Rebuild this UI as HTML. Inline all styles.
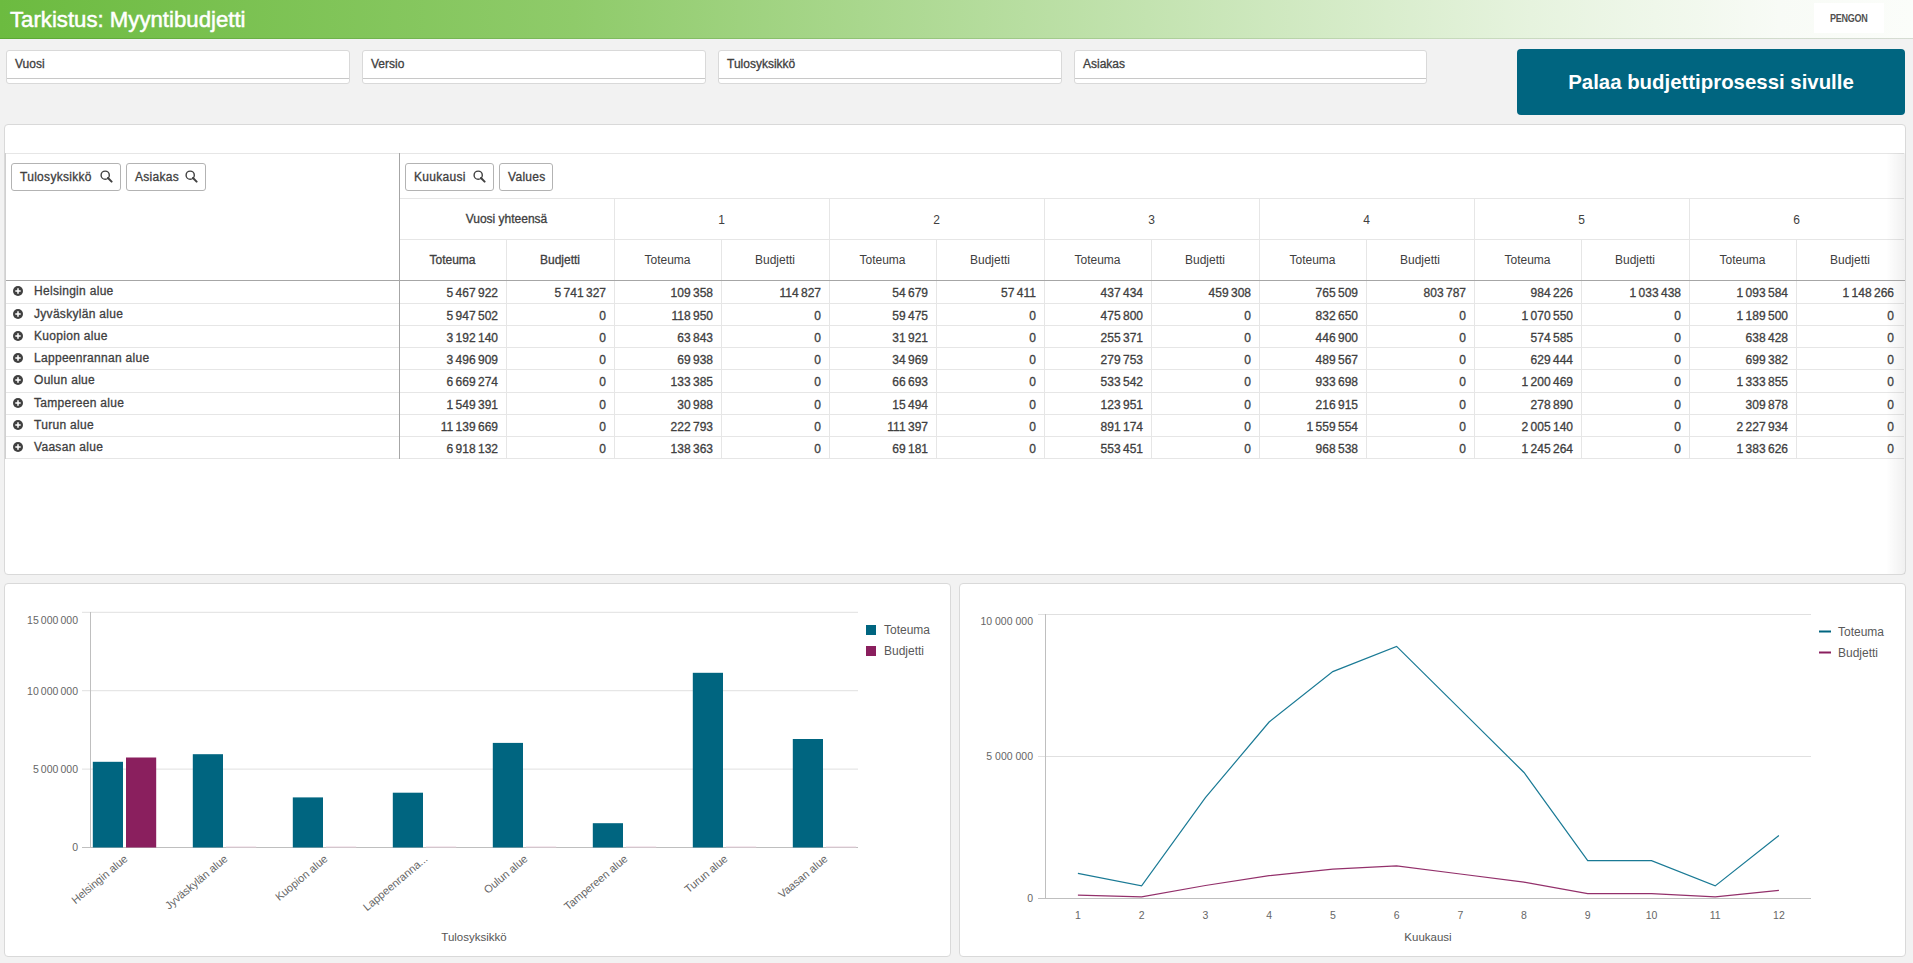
<!DOCTYPE html><html><head><meta charset="utf-8"><title>Tarkistus</title><style>
*{margin:0;padding:0;box-sizing:border-box}
html,body{width:1913px;height:963px;overflow:hidden;background:#f2f2f2;font-family:"Liberation Sans",sans-serif;color:#404040;position:relative}
#hdr{position:absolute;left:0;top:0;width:1913px;height:39px;background:linear-gradient(90deg,#6cbb40 0%,#8fcb6a 30%,#c3e3b0 60%,#e6f3de 80%,#f8fbf6 93%,#fbfdfa 100%)}#hdr:after{content:"";position:absolute;left:0;top:38px;width:1913px;height:1px;background:linear-gradient(90deg,#5aa833 0%,#88bf6a 40%,#c6d9bb 75%,#d6dcd3 100%)}
#hdr .title{position:absolute;left:10px;top:7px;font-size:22.2px;line-height:26px;color:#fff;white-space:nowrap;-webkit-text-stroke:0.5px #fff}
#hdr .logo{position:absolute;left:1814px;top:3px;width:70px;height:30px;background:#fff;color:#333}#hdr .logo span{position:absolute;left:16px;top:10px;font-size:11px;line-height:11px;font-weight:bold;letter-spacing:-0.3px;transform:scaleX(0.82);transform-origin:0 0;color:#505050}
.fbox{position:absolute;top:50px;height:34px;background:#fff;border:1px solid #d9d9d9;border-radius:3px}
.fbox span{position:absolute;left:8px;top:6px;font-size:12px;color:#404040;-webkit-text-stroke:0.3px #404040}
.fline{position:absolute;left:0;right:0;top:27px;height:1px;background:#c8c8c8}
#btn{position:absolute;left:1517px;top:49px;width:388px;height:66px;background:#006580;border-radius:4px;color:#fff;font-size:20.4px;font-weight:bold;text-align:center;line-height:66px;white-space:nowrap}
.panel{position:absolute;background:#fff;border:1px solid #d9d9d9;border-radius:4px}
#tbl{position:absolute;left:0;top:0}
.ln{position:absolute}
.tx{position:absolute;font-size:12px;white-space:nowrap;color:#404040;line-height:14px}
.tx.b{-webkit-text-stroke:0.3px #404040}
.tx.rl{letter-spacing:0.3px}
.pill{position:absolute;top:163px;height:28px;border:1px solid #b3b3b3;border-radius:3px;background:#fff}
.pill span{position:absolute;left:8px;top:6px;font-size:12px;letter-spacing:0.3px;color:#404040;-webkit-text-stroke:0.3px #404040}
.pill .srch{position:absolute;right:7px;top:6px}
.plus{position:absolute}
.chart{position:absolute}
.ax{font-size:10.5px;fill:#666;font-family:"Liberation Sans",sans-serif}
.axl{font-size:11px;fill:#666;font-family:"Liberation Sans",sans-serif}
.axt{font-size:11.5px;fill:#555;font-family:"Liberation Sans",sans-serif}
.lg{font-size:12px;fill:#595959;font-family:"Liberation Sans",sans-serif}
</style></head><body><div id="hdr"><div class="title">Tarkistus: Myyntibudjetti</div><div class="logo"><span>PENGON</span></div></div><div class="fbox" style="left:6px;width:344px"><span>Vuosi</span><div class="fline"></div></div><div class="fbox" style="left:362px;width:344px"><span>Versio</span><div class="fline"></div></div><div class="fbox" style="left:718px;width:344px"><span>Tulosyksikkö</span><div class="fline"></div></div><div class="fbox" style="left:1074px;width:353px"><span>Asiakas</span><div class="fline"></div></div><div id="btn">Palaa budjettiprosessi sivulle</div><div class="panel" id="tpanel" style="left:4px;top:124px;width:1902px;height:451px"></div><div id="tbl"><div class="ln" style="left:6px;top:153px;width:1898px;height:1px;background:#e6e6e6"></div><div class="ln" style="left:400px;top:198px;width:1504px;height:1px;background:#e6e6e6"></div><div class="ln" style="left:400px;top:239px;width:1504px;height:1px;background:#e6e6e6"></div><div class="ln" style="left:6px;top:303px;width:1898px;height:1px;background:#e6e6e6"></div><div class="ln" style="left:6px;top:325px;width:1898px;height:1px;background:#e6e6e6"></div><div class="ln" style="left:6px;top:347px;width:1898px;height:1px;background:#e6e6e6"></div><div class="ln" style="left:6px;top:369px;width:1898px;height:1px;background:#e6e6e6"></div><div class="ln" style="left:6px;top:392px;width:1898px;height:1px;background:#e6e6e6"></div><div class="ln" style="left:6px;top:414px;width:1898px;height:1px;background:#e6e6e6"></div><div class="ln" style="left:6px;top:436px;width:1898px;height:1px;background:#e6e6e6"></div><div class="ln" style="left:6px;top:458px;width:1898px;height:1px;background:#e6e6e6"></div><div class="ln" style="left:399px;top:153px;width:1px;height:306px;background:#a6a6a6"></div><div class="ln" style="left:5px;top:153px;width:1px;height:306px;background:#d0d0d0"></div><div class="ln" style="left:1886px;top:153px;width:19px;height:421px;background:linear-gradient(90deg,rgba(0,0,0,0),rgba(0,0,0,0.06))"></div><div class="ln" style="left:614px;top:198px;width:1px;height:261px;background:#e6e6e6"></div><div class="ln" style="left:829px;top:198px;width:1px;height:261px;background:#e6e6e6"></div><div class="ln" style="left:1044px;top:198px;width:1px;height:261px;background:#e6e6e6"></div><div class="ln" style="left:1259px;top:198px;width:1px;height:261px;background:#e6e6e6"></div><div class="ln" style="left:1474px;top:198px;width:1px;height:261px;background:#e6e6e6"></div><div class="ln" style="left:1689px;top:198px;width:1px;height:261px;background:#e6e6e6"></div><div class="ln" style="left:506px;top:239px;width:1px;height:220px;background:#e6e6e6"></div><div class="ln" style="left:721px;top:239px;width:1px;height:220px;background:#e6e6e6"></div><div class="ln" style="left:936px;top:239px;width:1px;height:220px;background:#e6e6e6"></div><div class="ln" style="left:1151px;top:239px;width:1px;height:220px;background:#e6e6e6"></div><div class="ln" style="left:1366px;top:239px;width:1px;height:220px;background:#e6e6e6"></div><div class="ln" style="left:1581px;top:239px;width:1px;height:220px;background:#e6e6e6"></div><div class="ln" style="left:1796px;top:239px;width:1px;height:220px;background:#e6e6e6"></div><div class="ln" style="left:6px;top:280px;width:1899px;height:1px;background:#a6a6a6"></div><div class="pill" style="left:11px;width:110px"><span>Tulosyksikkö</span><svg class="srch" width="13" height="13" viewBox="0 0 13 13"><circle cx="5.2" cy="5.2" r="4.1" fill="none" stroke="#404040" stroke-width="1.4"/><line x1="8" y1="8" x2="11.6" y2="11.6" stroke="#404040" stroke-width="2" stroke-linecap="round"/></svg></div><div class="pill" style="left:126px;width:80px"><span>Asiakas</span><svg class="srch" width="13" height="13" viewBox="0 0 13 13"><circle cx="5.2" cy="5.2" r="4.1" fill="none" stroke="#404040" stroke-width="1.4"/><line x1="8" y1="8" x2="11.6" y2="11.6" stroke="#404040" stroke-width="2" stroke-linecap="round"/></svg></div><div class="pill" style="left:405px;width:89px"><span>Kuukausi</span><svg class="srch" width="13" height="13" viewBox="0 0 13 13"><circle cx="5.2" cy="5.2" r="4.1" fill="none" stroke="#404040" stroke-width="1.4"/><line x1="8" y1="8" x2="11.6" y2="11.6" stroke="#404040" stroke-width="2" stroke-linecap="round"/></svg></div><div class="pill" style="left:499px;width:54px"><span>Values</span></div><div class="tx b" style="left:399px;top:212px;width:215px;text-align:center">Vuosi yhteensä</div><div class="tx " style="left:614px;top:213px;width:215px;text-align:center">1</div><div class="tx " style="left:829px;top:213px;width:215px;text-align:center">2</div><div class="tx " style="left:1044px;top:213px;width:215px;text-align:center">3</div><div class="tx " style="left:1259px;top:213px;width:215px;text-align:center">4</div><div class="tx " style="left:1474px;top:213px;width:215px;text-align:center">5</div><div class="tx " style="left:1689px;top:213px;width:215px;text-align:center">6</div><div class="tx b" style="left:399px;top:253px;width:107px;text-align:center">Toteuma</div><div class="tx b" style="left:506px;top:253px;width:108px;text-align:center">Budjetti</div><div class="tx " style="left:614px;top:253px;width:107px;text-align:center">Toteuma</div><div class="tx " style="left:721px;top:253px;width:108px;text-align:center">Budjetti</div><div class="tx " style="left:829px;top:253px;width:107px;text-align:center">Toteuma</div><div class="tx " style="left:936px;top:253px;width:108px;text-align:center">Budjetti</div><div class="tx " style="left:1044px;top:253px;width:107px;text-align:center">Toteuma</div><div class="tx " style="left:1151px;top:253px;width:108px;text-align:center">Budjetti</div><div class="tx " style="left:1259px;top:253px;width:107px;text-align:center">Toteuma</div><div class="tx " style="left:1366px;top:253px;width:108px;text-align:center">Budjetti</div><div class="tx " style="left:1474px;top:253px;width:107px;text-align:center">Toteuma</div><div class="tx " style="left:1581px;top:253px;width:108px;text-align:center">Budjetti</div><div class="tx " style="left:1689px;top:253px;width:107px;text-align:center">Toteuma</div><div class="tx " style="left:1796px;top:253px;width:108px;text-align:center">Budjetti</div><svg class="plus" style="left:12.5px;top:286px" width="10" height="10" viewBox="0 0 10 10"><circle cx="5" cy="5" r="5" fill="#404040"/><path d="M2.3 5H7.7M5 2.3V7.7" stroke="#fff" stroke-width="1.5"/></svg><div class="tx b rl" style="left:34px;top:284px;width:364px;text-align:left">Helsingin alue</div><div class="tx b num" style="left:399px;top:286px;width:99px;text-align:right">5 467 922</div><div class="tx b num" style="left:506px;top:286px;width:100px;text-align:right">5 741 327</div><div class="tx b num" style="left:614px;top:286px;width:99px;text-align:right">109 358</div><div class="tx b num" style="left:721px;top:286px;width:100px;text-align:right">114 827</div><div class="tx b num" style="left:829px;top:286px;width:99px;text-align:right">54 679</div><div class="tx b num" style="left:936px;top:286px;width:100px;text-align:right">57 411</div><div class="tx b num" style="left:1044px;top:286px;width:99px;text-align:right">437 434</div><div class="tx b num" style="left:1151px;top:286px;width:100px;text-align:right">459 308</div><div class="tx b num" style="left:1259px;top:286px;width:99px;text-align:right">765 509</div><div class="tx b num" style="left:1366px;top:286px;width:100px;text-align:right">803 787</div><div class="tx b num" style="left:1474px;top:286px;width:99px;text-align:right">984 226</div><div class="tx b num" style="left:1581px;top:286px;width:100px;text-align:right">1 033 438</div><div class="tx b num" style="left:1689px;top:286px;width:99px;text-align:right">1 093 584</div><div class="tx b num" style="left:1796px;top:286px;width:98px;text-align:right">1 148 266</div><svg class="plus" style="left:12.5px;top:309px" width="10" height="10" viewBox="0 0 10 10"><circle cx="5" cy="5" r="5" fill="#404040"/><path d="M2.3 5H7.7M5 2.3V7.7" stroke="#fff" stroke-width="1.5"/></svg><div class="tx b rl" style="left:34px;top:307px;width:364px;text-align:left">Jyväskylän alue</div><div class="tx b num" style="left:399px;top:309px;width:99px;text-align:right">5 947 502</div><div class="tx b num" style="left:506px;top:309px;width:100px;text-align:right">0</div><div class="tx b num" style="left:614px;top:309px;width:99px;text-align:right">118 950</div><div class="tx b num" style="left:721px;top:309px;width:100px;text-align:right">0</div><div class="tx b num" style="left:829px;top:309px;width:99px;text-align:right">59 475</div><div class="tx b num" style="left:936px;top:309px;width:100px;text-align:right">0</div><div class="tx b num" style="left:1044px;top:309px;width:99px;text-align:right">475 800</div><div class="tx b num" style="left:1151px;top:309px;width:100px;text-align:right">0</div><div class="tx b num" style="left:1259px;top:309px;width:99px;text-align:right">832 650</div><div class="tx b num" style="left:1366px;top:309px;width:100px;text-align:right">0</div><div class="tx b num" style="left:1474px;top:309px;width:99px;text-align:right">1 070 550</div><div class="tx b num" style="left:1581px;top:309px;width:100px;text-align:right">0</div><div class="tx b num" style="left:1689px;top:309px;width:99px;text-align:right">1 189 500</div><div class="tx b num" style="left:1796px;top:309px;width:98px;text-align:right">0</div><svg class="plus" style="left:12.5px;top:331px" width="10" height="10" viewBox="0 0 10 10"><circle cx="5" cy="5" r="5" fill="#404040"/><path d="M2.3 5H7.7M5 2.3V7.7" stroke="#fff" stroke-width="1.5"/></svg><div class="tx b rl" style="left:34px;top:329px;width:364px;text-align:left">Kuopion alue</div><div class="tx b num" style="left:399px;top:331px;width:99px;text-align:right">3 192 140</div><div class="tx b num" style="left:506px;top:331px;width:100px;text-align:right">0</div><div class="tx b num" style="left:614px;top:331px;width:99px;text-align:right">63 843</div><div class="tx b num" style="left:721px;top:331px;width:100px;text-align:right">0</div><div class="tx b num" style="left:829px;top:331px;width:99px;text-align:right">31 921</div><div class="tx b num" style="left:936px;top:331px;width:100px;text-align:right">0</div><div class="tx b num" style="left:1044px;top:331px;width:99px;text-align:right">255 371</div><div class="tx b num" style="left:1151px;top:331px;width:100px;text-align:right">0</div><div class="tx b num" style="left:1259px;top:331px;width:99px;text-align:right">446 900</div><div class="tx b num" style="left:1366px;top:331px;width:100px;text-align:right">0</div><div class="tx b num" style="left:1474px;top:331px;width:99px;text-align:right">574 585</div><div class="tx b num" style="left:1581px;top:331px;width:100px;text-align:right">0</div><div class="tx b num" style="left:1689px;top:331px;width:99px;text-align:right">638 428</div><div class="tx b num" style="left:1796px;top:331px;width:98px;text-align:right">0</div><svg class="plus" style="left:12.5px;top:353px" width="10" height="10" viewBox="0 0 10 10"><circle cx="5" cy="5" r="5" fill="#404040"/><path d="M2.3 5H7.7M5 2.3V7.7" stroke="#fff" stroke-width="1.5"/></svg><div class="tx b rl" style="left:34px;top:351px;width:364px;text-align:left">Lappeenrannan alue</div><div class="tx b num" style="left:399px;top:353px;width:99px;text-align:right">3 496 909</div><div class="tx b num" style="left:506px;top:353px;width:100px;text-align:right">0</div><div class="tx b num" style="left:614px;top:353px;width:99px;text-align:right">69 938</div><div class="tx b num" style="left:721px;top:353px;width:100px;text-align:right">0</div><div class="tx b num" style="left:829px;top:353px;width:99px;text-align:right">34 969</div><div class="tx b num" style="left:936px;top:353px;width:100px;text-align:right">0</div><div class="tx b num" style="left:1044px;top:353px;width:99px;text-align:right">279 753</div><div class="tx b num" style="left:1151px;top:353px;width:100px;text-align:right">0</div><div class="tx b num" style="left:1259px;top:353px;width:99px;text-align:right">489 567</div><div class="tx b num" style="left:1366px;top:353px;width:100px;text-align:right">0</div><div class="tx b num" style="left:1474px;top:353px;width:99px;text-align:right">629 444</div><div class="tx b num" style="left:1581px;top:353px;width:100px;text-align:right">0</div><div class="tx b num" style="left:1689px;top:353px;width:99px;text-align:right">699 382</div><div class="tx b num" style="left:1796px;top:353px;width:98px;text-align:right">0</div><svg class="plus" style="left:12.5px;top:375px" width="10" height="10" viewBox="0 0 10 10"><circle cx="5" cy="5" r="5" fill="#404040"/><path d="M2.3 5H7.7M5 2.3V7.7" stroke="#fff" stroke-width="1.5"/></svg><div class="tx b rl" style="left:34px;top:373px;width:364px;text-align:left">Oulun alue</div><div class="tx b num" style="left:399px;top:375px;width:99px;text-align:right">6 669 274</div><div class="tx b num" style="left:506px;top:375px;width:100px;text-align:right">0</div><div class="tx b num" style="left:614px;top:375px;width:99px;text-align:right">133 385</div><div class="tx b num" style="left:721px;top:375px;width:100px;text-align:right">0</div><div class="tx b num" style="left:829px;top:375px;width:99px;text-align:right">66 693</div><div class="tx b num" style="left:936px;top:375px;width:100px;text-align:right">0</div><div class="tx b num" style="left:1044px;top:375px;width:99px;text-align:right">533 542</div><div class="tx b num" style="left:1151px;top:375px;width:100px;text-align:right">0</div><div class="tx b num" style="left:1259px;top:375px;width:99px;text-align:right">933 698</div><div class="tx b num" style="left:1366px;top:375px;width:100px;text-align:right">0</div><div class="tx b num" style="left:1474px;top:375px;width:99px;text-align:right">1 200 469</div><div class="tx b num" style="left:1581px;top:375px;width:100px;text-align:right">0</div><div class="tx b num" style="left:1689px;top:375px;width:99px;text-align:right">1 333 855</div><div class="tx b num" style="left:1796px;top:375px;width:98px;text-align:right">0</div><svg class="plus" style="left:12.5px;top:398px" width="10" height="10" viewBox="0 0 10 10"><circle cx="5" cy="5" r="5" fill="#404040"/><path d="M2.3 5H7.7M5 2.3V7.7" stroke="#fff" stroke-width="1.5"/></svg><div class="tx b rl" style="left:34px;top:396px;width:364px;text-align:left">Tampereen alue</div><div class="tx b num" style="left:399px;top:398px;width:99px;text-align:right">1 549 391</div><div class="tx b num" style="left:506px;top:398px;width:100px;text-align:right">0</div><div class="tx b num" style="left:614px;top:398px;width:99px;text-align:right">30 988</div><div class="tx b num" style="left:721px;top:398px;width:100px;text-align:right">0</div><div class="tx b num" style="left:829px;top:398px;width:99px;text-align:right">15 494</div><div class="tx b num" style="left:936px;top:398px;width:100px;text-align:right">0</div><div class="tx b num" style="left:1044px;top:398px;width:99px;text-align:right">123 951</div><div class="tx b num" style="left:1151px;top:398px;width:100px;text-align:right">0</div><div class="tx b num" style="left:1259px;top:398px;width:99px;text-align:right">216 915</div><div class="tx b num" style="left:1366px;top:398px;width:100px;text-align:right">0</div><div class="tx b num" style="left:1474px;top:398px;width:99px;text-align:right">278 890</div><div class="tx b num" style="left:1581px;top:398px;width:100px;text-align:right">0</div><div class="tx b num" style="left:1689px;top:398px;width:99px;text-align:right">309 878</div><div class="tx b num" style="left:1796px;top:398px;width:98px;text-align:right">0</div><svg class="plus" style="left:12.5px;top:420px" width="10" height="10" viewBox="0 0 10 10"><circle cx="5" cy="5" r="5" fill="#404040"/><path d="M2.3 5H7.7M5 2.3V7.7" stroke="#fff" stroke-width="1.5"/></svg><div class="tx b rl" style="left:34px;top:418px;width:364px;text-align:left">Turun alue</div><div class="tx b num" style="left:399px;top:420px;width:99px;text-align:right">11 139 669</div><div class="tx b num" style="left:506px;top:420px;width:100px;text-align:right">0</div><div class="tx b num" style="left:614px;top:420px;width:99px;text-align:right">222 793</div><div class="tx b num" style="left:721px;top:420px;width:100px;text-align:right">0</div><div class="tx b num" style="left:829px;top:420px;width:99px;text-align:right">111 397</div><div class="tx b num" style="left:936px;top:420px;width:100px;text-align:right">0</div><div class="tx b num" style="left:1044px;top:420px;width:99px;text-align:right">891 174</div><div class="tx b num" style="left:1151px;top:420px;width:100px;text-align:right">0</div><div class="tx b num" style="left:1259px;top:420px;width:99px;text-align:right">1 559 554</div><div class="tx b num" style="left:1366px;top:420px;width:100px;text-align:right">0</div><div class="tx b num" style="left:1474px;top:420px;width:99px;text-align:right">2 005 140</div><div class="tx b num" style="left:1581px;top:420px;width:100px;text-align:right">0</div><div class="tx b num" style="left:1689px;top:420px;width:99px;text-align:right">2 227 934</div><div class="tx b num" style="left:1796px;top:420px;width:98px;text-align:right">0</div><svg class="plus" style="left:12.5px;top:442px" width="10" height="10" viewBox="0 0 10 10"><circle cx="5" cy="5" r="5" fill="#404040"/><path d="M2.3 5H7.7M5 2.3V7.7" stroke="#fff" stroke-width="1.5"/></svg><div class="tx b rl" style="left:34px;top:440px;width:364px;text-align:left">Vaasan alue</div><div class="tx b num" style="left:399px;top:442px;width:99px;text-align:right">6 918 132</div><div class="tx b num" style="left:506px;top:442px;width:100px;text-align:right">0</div><div class="tx b num" style="left:614px;top:442px;width:99px;text-align:right">138 363</div><div class="tx b num" style="left:721px;top:442px;width:100px;text-align:right">0</div><div class="tx b num" style="left:829px;top:442px;width:99px;text-align:right">69 181</div><div class="tx b num" style="left:936px;top:442px;width:100px;text-align:right">0</div><div class="tx b num" style="left:1044px;top:442px;width:99px;text-align:right">553 451</div><div class="tx b num" style="left:1151px;top:442px;width:100px;text-align:right">0</div><div class="tx b num" style="left:1259px;top:442px;width:99px;text-align:right">968 538</div><div class="tx b num" style="left:1366px;top:442px;width:100px;text-align:right">0</div><div class="tx b num" style="left:1474px;top:442px;width:99px;text-align:right">1 245 264</div><div class="tx b num" style="left:1581px;top:442px;width:100px;text-align:right">0</div><div class="tx b num" style="left:1689px;top:442px;width:99px;text-align:right">1 383 626</div><div class="tx b num" style="left:1796px;top:442px;width:98px;text-align:right">0</div></div><div class="panel" style="left:4px;top:583px;width:947px;height:374px"></div><svg class="chart" width="1913" height="963" style="left:0;top:0"><line x1="82" y1="612.3" x2="858" y2="612.3" stroke="#e0e0e0" stroke-width="1"/><text x="78" y="623.6" text-anchor="end" class="ax">15 000 000</text><line x1="82" y1="690.7" x2="858" y2="690.7" stroke="#e0e0e0" stroke-width="1"/><text x="78" y="694.5" text-anchor="end" class="ax">10 000 000</text><line x1="82" y1="769.1" x2="858" y2="769.1" stroke="#e0e0e0" stroke-width="1"/><text x="78" y="772.9" text-anchor="end" class="ax">5 000 000</text><line x1="82" y1="847.5" x2="858" y2="847.5" stroke="#bfbfbf" stroke-width="1"/><text x="78" y="851.3" text-anchor="end" class="ax">0</text><line x1="90.5" y1="612" x2="90.5" y2="848" stroke="#bfbfbf" stroke-width="1"/><rect x="92.8" y="761.8" width="30.2" height="85.7" fill="#006580"/><rect x="126.0" y="757.5" width="30.2" height="90.0" fill="#8a1f5e"/><rect x="192.8" y="754.2" width="30.2" height="93.3" fill="#006580"/><line x1="226.0" y1="847" x2="256.2" y2="847" stroke="#e8d0dc" stroke-width="1"/><rect x="292.8" y="797.4" width="30.2" height="50.1" fill="#006580"/><line x1="326.0" y1="847" x2="356.2" y2="847" stroke="#e8d0dc" stroke-width="1"/><rect x="392.8" y="792.7" width="30.2" height="54.8" fill="#006580"/><line x1="426.0" y1="847" x2="456.2" y2="847" stroke="#e8d0dc" stroke-width="1"/><rect x="492.8" y="742.9" width="30.2" height="104.6" fill="#006580"/><line x1="526.0" y1="847" x2="556.2" y2="847" stroke="#e8d0dc" stroke-width="1"/><rect x="592.8" y="823.2" width="30.2" height="24.3" fill="#006580"/><line x1="626.0" y1="847" x2="656.2" y2="847" stroke="#e8d0dc" stroke-width="1"/><rect x="692.8" y="672.8" width="30.2" height="174.7" fill="#006580"/><line x1="726.0" y1="847" x2="756.2" y2="847" stroke="#e8d0dc" stroke-width="1"/><rect x="792.8" y="739.0" width="30.2" height="108.5" fill="#006580"/><line x1="826.0" y1="847" x2="856.2" y2="847" stroke="#e8d0dc" stroke-width="1"/><text transform="translate(128.4,860) rotate(-40)" text-anchor="end" class="axl">Helsingin alue</text><text transform="translate(228.4,860) rotate(-40)" text-anchor="end" class="axl">Jyväskylän alue</text><text transform="translate(328.4,860) rotate(-40)" text-anchor="end" class="axl">Kuopion alue</text><text transform="translate(428.4,860) rotate(-40)" text-anchor="end" class="axl">Lappeenranna...</text><text transform="translate(528.4,860) rotate(-40)" text-anchor="end" class="axl">Oulun alue</text><text transform="translate(628.4,860) rotate(-40)" text-anchor="end" class="axl">Tampereen alue</text><text transform="translate(728.4,860) rotate(-40)" text-anchor="end" class="axl">Turun alue</text><text transform="translate(828.4,860) rotate(-40)" text-anchor="end" class="axl">Vaasan alue</text><text x="474" y="941" text-anchor="middle" class="axt">Tulosyksikkö</text><rect x="866" y="625" width="10" height="10" fill="#006580"/><text x="884" y="634" class="lg">Toteuma</text><rect x="866" y="646" width="10" height="10" fill="#8a1f5e"/><text x="884" y="655" class="lg">Budjetti</text></svg><div class="panel" style="left:959px;top:583px;width:947px;height:374px"></div><svg class="chart" width="1913" height="963" style="left:0;top:0"><line x1="1038" y1="614.5" x2="1811" y2="614.5" stroke="#e0e0e0" stroke-width="1"/><text x="1033" y="625.3" text-anchor="end" class="ax">10 000 000</text><line x1="1038" y1="756.5" x2="1811" y2="756.5" stroke="#e0e0e0" stroke-width="1"/><text x="1033" y="760.3" text-anchor="end" class="ax">5 000 000</text><line x1="1038" y1="898.5" x2="1811" y2="898.5" stroke="#bfbfbf" stroke-width="1"/><text x="1033" y="902.3" text-anchor="end" class="ax">0</text><line x1="1045.5" y1="614" x2="1045.5" y2="898" stroke="#bfbfbf" stroke-width="1"/><polyline points="1077.9,873.3 1141.6,885.9 1205.4,797.7 1269.1,722.0 1332.8,671.6 1396.6,646.4 1460.3,709.4 1524.0,772.5 1587.7,860.7 1651.5,860.7 1715.2,885.9 1778.9,835.5" fill="none" stroke="#1a7a95" stroke-width="1.2"/><polyline points="1077.9,895.2 1141.6,896.9 1205.4,885.5 1269.1,875.7 1332.8,869.2 1396.6,865.9 1460.3,874.0 1524.0,882.2 1587.7,893.6 1651.5,893.6 1715.2,896.9 1778.9,890.3" fill="none" stroke="#93306b" stroke-width="1.2"/><text x="1077.9" y="919" text-anchor="middle" class="ax">1</text><text x="1141.6" y="919" text-anchor="middle" class="ax">2</text><text x="1205.4" y="919" text-anchor="middle" class="ax">3</text><text x="1269.1" y="919" text-anchor="middle" class="ax">4</text><text x="1332.8" y="919" text-anchor="middle" class="ax">5</text><text x="1396.6" y="919" text-anchor="middle" class="ax">6</text><text x="1460.3" y="919" text-anchor="middle" class="ax">7</text><text x="1524.0" y="919" text-anchor="middle" class="ax">8</text><text x="1587.7" y="919" text-anchor="middle" class="ax">9</text><text x="1651.5" y="919" text-anchor="middle" class="ax">10</text><text x="1715.2" y="919" text-anchor="middle" class="ax">11</text><text x="1778.9" y="919" text-anchor="middle" class="ax">12</text><text x="1428" y="941" text-anchor="middle" class="axt">Kuukausi</text><line x1="1819" y1="631.5" x2="1831" y2="631.5" stroke="#006580" stroke-width="2"/><text x="1838" y="636" class="lg">Toteuma</text><line x1="1819" y1="652.5" x2="1831" y2="652.5" stroke="#8a1f5e" stroke-width="2"/><text x="1838" y="657" class="lg">Budjetti</text></svg></body></html>
